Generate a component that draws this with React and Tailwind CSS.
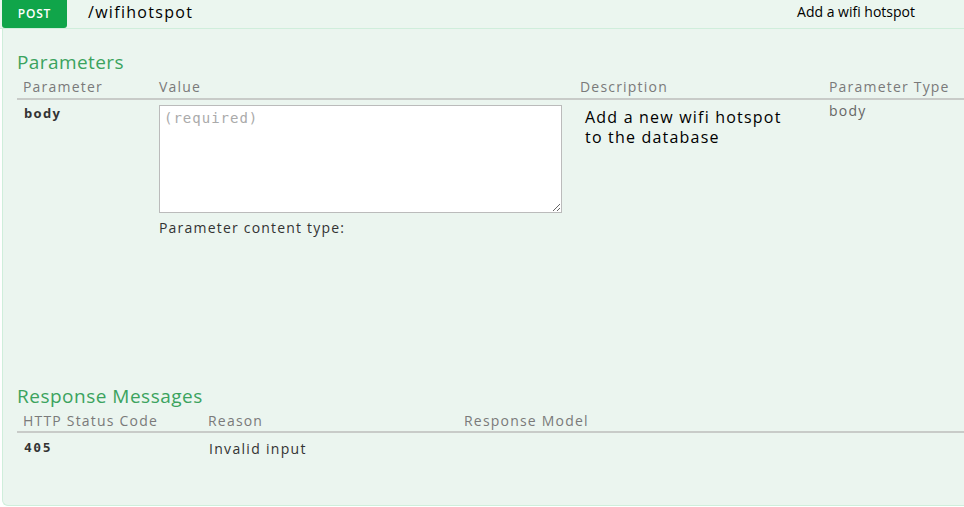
export default function App() {
    return (
    <div className="w-[964px] h-[507px] bg-white overflow-hidden font-['Open_Sans',sans-serif]">
        <div className="flex items-center h-[29px] pb-[5px] bg-[#ebf6ef] border-b border-[#cfeedb]">
            <div className="ml-[2px] w-[65px] h-[28px] bg-[#10a54a] rounded-b-[3px] flex items-center justify-center self-start">
                <span className="text-white text-[12px] font-semibold tracking-[0.8px]">POST</span>
            </div>
            <span className="ml-[21px] text-[16px] text-black tracking-[1.3px]">/wifihotspot</span>
            <span className="ml-auto mr-[49px] text-[14px] text-black">Add a wifi hotspot</span>
        </div>
        <div className="ml-[2px] h-[477px] bg-[#ebf5ef] border-l border-b border-[#cfeedb] rounded-bl-[6px] pl-[14px] pt-[21px]">
            <h4 className="text-[19px] text-[#3ba35e] leading-[24px] tracking-[0.4px]">Parameters</h4>
            <div className="flex text-[14px] text-[#7a7a7a] tracking-[1.2px] h-[26px] items-end pb-[2px] leading-[18px] border-b-2 border-[#c8cbc8] pl-[6px]">
                <span className="w-[136px]">Parameter</span>
                <span className="w-[421px]">Value</span>
                <span className="w-[249px]">Description</span>
                <span>Parameter Type</span>
            </div>
            <div className="flex pl-[7px] h-[284px]">
                <span className="w-[135px] pt-[4px] text-[13px] leading-[18px] font-bold text-[#333] tracking-[1.3px]">body</span>
                <div className="w-[421px] pt-[5px]">
                    <textarea
                    placeholder="(required)"
                    className="w-[403px] h-[108px] bg-white border border-[#bbb] px-[4px] py-[2px] text-[14px] tracking-[1px] font-['DejaVu_Sans_Mono',monospace] placeholder-[#aaa] outline-none block"
                    />
                    <p className="mt-[5px] text-[14px] leading-[19px] tracking-[1.2px] text-[#333]">Parameter content type:</p>
                </div>
                <p className="w-[249px] pl-[5px] pt-[7px] text-[16px] tracking-[1.2px] text-black leading-[20px]">Add a new wifi hotspot<br />to the database</p>
                <span className="pt-[2px] text-[14px] leading-[18px] tracking-[1.2px] text-[#666]">body</span>
            </div>
            <h4 className="text-[19px] text-[#3ba35e] leading-[24px] tracking-[0.5px]">Response Messages</h4>
            <div className="flex text-[14px] text-[#7a7a7a] tracking-[1.2px] h-[25px] items-end pb-[1px] leading-[18px] border-b-2 border-[#c8cbc8] pl-[6px]">
                <span className="w-[185px]">HTTP Status Code</span>
                <span className="w-[256px]">Reason</span>
                <span>Response Model</span>
            </div>
            <div className="flex pl-[7px] h-[30px] items-center text-[14px] tracking-[1.3px] text-[#333]">
                <span className="w-[185px] font-['DejaVu_Sans_Mono',monospace] text-[13px] tracking-[1.5px] font-bold">405</span>
                <span>Invalid input</span>
            </div>
        </div>
    </div>
    )
}
